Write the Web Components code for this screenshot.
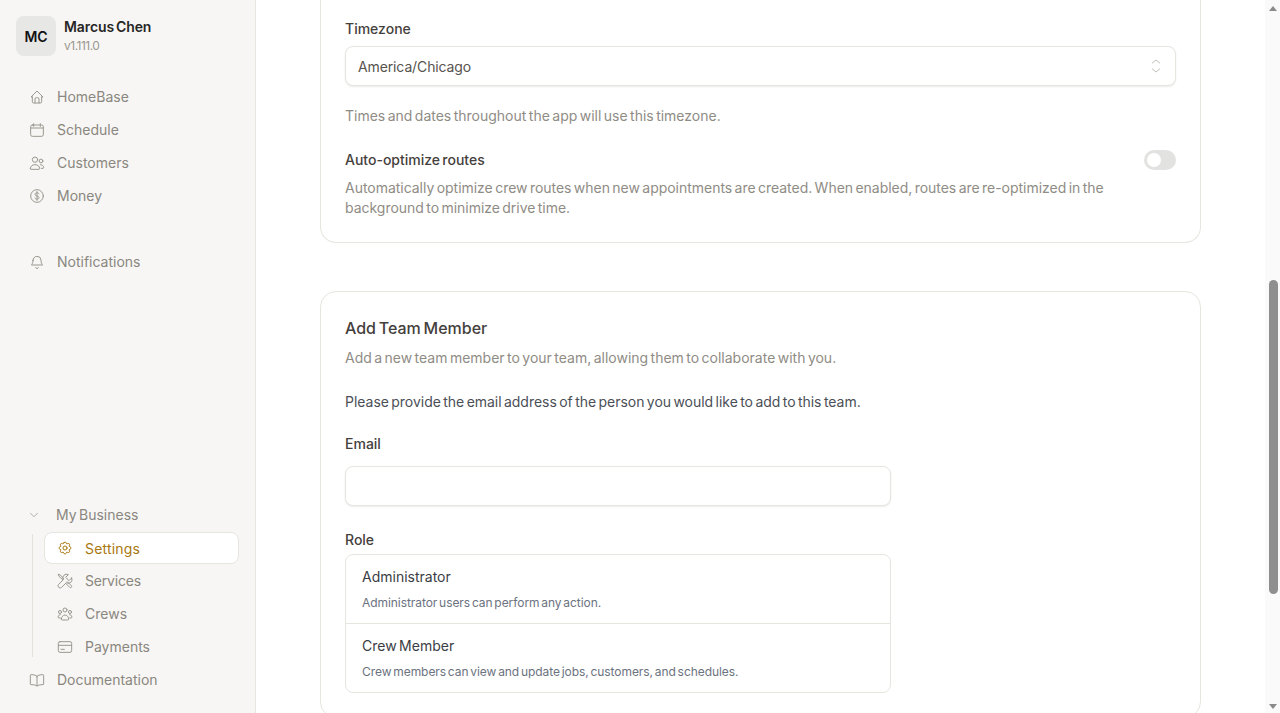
<!DOCTYPE html>
<html lang="en">
<head>
<meta charset="utf-8">
<title>Settings</title>
<style>
html, body { margin: 0; height: 100%; overflow: hidden; }
body { font-family: Inter, "Liberation Sans", sans-serif; font-size: 14px; word-spacing: -1.5px; color: #44403c; background: #fff; }
</style>
</head>
<body>
<app-shell>
  <app-sidebar slot="side"></app-sidebar>
  <settings-card class="first">
    <form-label>Timezone</form-label>
    <select-box>America/Chicago</select-box>
    <hint-text style="margin-top:20px">Times and dates throughout the app will use this timezone.</hint-text>
    <toggle-row>Auto-optimize routes</toggle-row>
    <hint-text style="margin-top:8px;letter-spacing:-.025px">Automatically optimize crew routes when new appointments are created. When enabled, routes are re-optimized in the background to minimize drive time.</hint-text>
  </settings-card>
  <settings-card class="second">
    <add-member></add-member>
  </settings-card>
  <app-scrollbar slot="bar"></app-scrollbar>
</app-shell>

<script>
const ICONS = {
  home: '<path d="M5 12H3l9-9 9 9h-2"/><path d="M5 12v7a2 2 0 0 0 2 2h10a2 2 0 0 0 2-2v-7"/><path d="M9 21v-6a2 2 0 0 1 2-2h2a2 2 0 0 1 2 2v6"/>',
  calendar: '<path d="M7 2.500v4M17 2.500v4"/><rect x="2.500" y="4.500" width="19" height="17" rx="2.500"/><path d="M2.500 9h19"/>',
  users: '<circle cx="9" cy="7" r="4"/><path d="M2 20.500c0-3.600 3-6 7-6s7 2.400 7 6c0 .6-.4 1-1 1H3c-.6 0-1-.4-1-1Z"/><circle cx="18" cy="9" r="2.800"/><path d="M17 14.600c3 0 5 1.700 5 4.400 0 .6-.4 1-1 1h-2.500"/>',
  money: '<circle cx="12" cy="12" r="9.500"/><path d="M15 8.800c-.5-1-1.600-1.600-3-1.600-1.800 0-3 .9-3 2.300 0 3.200 6 1.600 6 4.900 0 1.400-1.300 2.400-3 2.400-1.500 0-2.600-.7-3.100-1.800"/><path d="M12 5.500v13"/>',
  bell: '<path d="M6 9.500a6 6 0 0 1 12 0c0 5 2.500 7 2.500 7h-17S6 14.500 6 9.500Z"/><path d="M10 20.500a2.200 2.200 0 0 0 4 0"/>',
  chevron: '<path d="m6 9 6 6 6-6"/>',
  gear: '<path d="M10.325 4.317c.426-1.756 2.924-1.756 3.350 0a1.724 1.724 0 0 0 2.573 1.066c1.543-.94 3.310.826 2.370 2.370a1.724 1.724 0 0 0 1.065 2.572c1.756.426 1.756 2.924 0 3.350a1.724 1.724 0 0 0-1.066 2.573c.94 1.543-.826 3.310-2.370 2.370a1.724 1.724 0 0 0-2.572 1.065c-.426 1.756-2.924 1.756-3.350 0a1.724 1.724 0 0 0-2.573-1.066c-1.543.94-3.310-.826-2.370-2.370a1.724 1.724 0 0 0-1.065-2.572c-1.756-.426-1.756-2.924 0-3.350a1.724 1.724 0 0 0 1.066-2.573c-.94-1.543.826-3.310 2.370-2.370 1 .608 2.296.07 2.572-1.065z"/><circle cx="12" cy="12" r="3"/>',
  tools: '<path d="M22 7.500 18 11.500 13 6.500 17 2.500a5.500 5.500 0 0 0-7.500 7.500L2.500 17a3 3 0 0 0 4.500 4.500L14 14.500a5.500 5.500 0 0 0 8-7Z"/><path d="M8.500 10 3 5 1.800 1.800 5 3l5 5.500"/><path d="m15.500 13 6 6a2 2 0 0 1 0 2.500a2 2 0 0 1-2.500 0l-6-6"/>',
  crews: '<circle cx="12" cy="6" r="3"/><circle cx="4.500" cy="9" r="2.300"/><circle cx="19.500" cy="9" r="2.300"/><path d="M6.500 19.500c0-3 2.500-6 5.500-6s5.500 3 5.500 6c0 .8-.5 1.500-1.500 1.500H8c-1 0-1.500-.7-1.500-1.500Z"/><path d="M5 18H3c-.8 0-1.300-.6-1.300-1.300 0-2 1.300-3.700 3.300-3.700"/><path d="M19 18h2c.8 0 1.300-.6 1.300-1.300 0-2-1.300-3.700-3.300-3.700"/>',
  card: '<rect x="2" y="4" width="20" height="16" rx="2.500"/><path d="M2 9.500h20"/><path d="M6 15.500h5"/>',
  book: '<path d="M12 6.500C10.500 4.800 8 4 3 4c-.6 0-1 .4-1 1v13c0 .6.4 1 1 1 5 0 7.500.8 9 2 1.500-1.200 4-2 9-2 .6 0 1-.4 1-1V5c0-.6-.4-1-1-1-5 0-7.500.8-9 2.500Z"/><path d="M12 6.500V21"/>'
};

function define(name, css, html) {
  customElements.define(name, class extends HTMLElement {
    constructor() {
      super();
      this.attachShadow({ mode: 'open' }).innerHTML = '<style>' + css + '</style>' + (typeof html === 'function' ? html(this) : html);
    }
  });
}

define('nav-icon', `
  :host { display: inline-flex; width: 16px; height: 16px; flex: none; }
  svg { width: 100%; height: 100%; fill: none; stroke: currentColor; stroke-width: 1.500; stroke-linecap: round; stroke-linejoin: round; }
`, el => '<svg viewBox="0 0 24 24">' + ICONS[el.getAttribute('name')] + '</svg>');

define('nav-item', `
  :host { display: flex; align-items: center; gap: 12px; height: 33px; padding-left: 29px; color: #8a8780; font-size: 14px; box-sizing: border-box; }
  :host([sub]) { padding-left: 57px; }
  .ic { color: #9b9890; display: inline-flex; }
`, el => '<span class="ic"><nav-icon name="' + el.getAttribute('icon') + '"></nav-icon></span><slot></slot>');

define('sub-active', `
  :host { display: flex; align-items: center; gap: 12px; height: 32px; margin: 1px 16px 0 44px; padding-left: 12px; box-sizing: border-box;
    background: #fff; border: 1px solid #e7e5e0; border-radius: 8px; color: #a9780f; font-size: 14px; letter-spacing: .2px; }
`, el => '<nav-icon name="gear"></nav-icon><slot></slot>');

define('nav-group', `
  :host { display: block; position: relative; }
  .head { display: flex; align-items: center; gap: 15px; height: 33px; padding-left: 27px; color: #8a8780; font-size: 14px; box-sizing: border-box; }
  .head nav-icon { width: 14px; height: 14px; color: #a5a29a; }
  .rail { position: absolute; left: 32px; top: 36px; bottom: 6px; width: 1px; background: #e4e2dd; }
`, `<div class="head"><nav-icon name="chevron"></nav-icon>My Business</div><div class="rail"></div><slot></slot>`);

define('app-sidebar', `
  :host { display: flex; flex-direction: column; width: 256px; height: 713px; box-sizing: border-box; background: #f7f6f4; border-right: 1px solid #e7e5e0; flex: none; }
  .who { display: flex; gap: 8px; padding: 16px 16px 0; height: 64px; }
  .avatar { width: 40px; height: 40px; border-radius: 8px; background: #e7e7e6; color: #111; font-weight: 600; font-size: 14px; display: flex; align-items: center; justify-content: center; }
  .name { color: #262626; font-weight: 600; font-size: 14px; line-height: 20px; margin-top: 1px; letter-spacing: -.1px; }
  .ver { color: #9a978f; font-size: 12px; line-height: 16px; margin-top: 1px; letter-spacing: -.5px; }
  .gap { height: 33px; }
  .spring { flex: 1; }
  .bottom { padding-bottom: 17px; }
`, `
  <div class="who">
    <div class="avatar">MC</div>
    <div><div class="name">Marcus Chen</div><div class="ver">v1.111.0</div></div>
  </div>
  <nav-item icon="home">HomeBase</nav-item>
  <nav-item icon="calendar">Schedule</nav-item>
  <nav-item icon="users">Customers</nav-item>
  <nav-item icon="money">Money</nav-item>
  <div class="gap"></div>
  <nav-item icon="bell">Notifications</nav-item>
  <div class="spring"></div>
  <div class="bottom">
    <nav-group>
      <sub-active>Settings</sub-active>
      <nav-item sub icon="tools" style="letter-spacing:-.2px">Services</nav-item>
      <nav-item sub icon="crews">Crews</nav-item>
      <nav-item sub icon="card">Payments</nav-item>
    </nav-group>
    <nav-item icon="book">Documentation</nav-item>
  </div>
`);

define('app-shell', `
  :host { display: flex; width: 1280px; height: 713px; overflow: hidden; }
  main { flex: 1; min-width: 0; display: flex; flex-direction: column; align-items: flex-start; gap: 48px; padding-left: 64px; overflow: hidden; }
`, `<slot name="side"></slot><main><slot></slot></main><slot name="bar"></slot>`);

define('settings-card', `
  :host { display: block; width: 881px; flex: none; box-sizing: border-box; background: #fff; border: 1px solid #e7e5e0; border-radius: 16px; padding: 24px; }
  :host(.first) { border-top: 0; border-top-left-radius: 0; border-top-right-radius: 0; padding-top: 19px; padding-bottom: 24px; }
`, `<slot></slot>`);

define('form-label', `
  :host { display: block; color: #44403c; font-size: 14px; font-weight: 500; line-height: 20px; }
`, `<slot></slot>`);

define('hint-text', `
  :host { display: block; color: #8f8c85; font-size: 14px; line-height: 20px; }
`, `<slot></slot>`);

define('select-box', `
  :host { display: flex; align-items: center; justify-content: space-between; height: 40px; margin-top: 7px; padding: 0 11px 0 12px; box-sizing: border-box;
    border: 1px solid #e7e5e0; border-radius: 8px; box-shadow: 0 1px 2px rgba(0,0,0,.08); color: #57534e; font-size: 14px; letter-spacing: -.12px; background: #fff; }
  svg { width: 16px; height: 16px; fill: none; stroke: #c4c1ba; stroke-width: 1.500; stroke-linecap: round; stroke-linejoin: round; }
`, `<slot></slot><svg viewBox="0 0 24 24"><path d="m6.500 7.500 5.500-4.500 5.500 4.500M6.500 16.500l5.500 4.500 5.500-4.500"/></svg>`);

define('toggle-row', `
  :host { display: flex; align-items: center; justify-content: space-between; margin-top: 24px; color: #44403c; font-size: 14px; font-weight: 500; line-height: 20px; }
  .sw { width: 32px; height: 20px; border-radius: 10px; background: #e2e2e1; padding: 3px; box-sizing: border-box; }
  .knob { width: 14px; height: 14px; border-radius: 50%; background: #fff; }
`, `<slot></slot><div class="sw"><div class="knob"></div></div>`);

define('add-member', `
  :host { display: block; }
  h2 { margin: 0; color: #44403c; font-size: 16px; font-weight: 500; line-height: 24px; }
  .desc { color: #8f8c85; font-size: 14px; line-height: 20px; margin-top: 8px; }
  .lead { color: #4b4f57; font-size: 14px; line-height: 20px; margin-top: 24px; letter-spacing: -.025px; }
  form-label { margin-top: 22px; }
  .col { width: 546px; }
  .input { height: 40px; margin-top: 12px; border: 1px solid #e7e5e0; border-radius: 8px; box-shadow: 0 1px 2px rgba(0,0,0,.08); box-sizing: border-box; background: #fff; }
  .role-label { margin-top: 24px; }
  .roles { margin-top: 4px; border: 1px solid #e7e5e0; border-radius: 8px; }
  .role { height: 68px; padding: 12px 16px; box-sizing: border-box; }
  .role + .role { height: 69px; border-top: 1px solid #e7e5e0; }
  .t { color: #3a3d44; font-size: 14px; line-height: 20px; }
  .d { color: #6b7280; font-size: 12px; line-height: 16px; margin-top: 8px; letter-spacing: -.06px; }
`, `
  <h2>Add Team Member</h2>
  <div class="desc">Add a new team member to your team, allowing them to collaborate with you.</div>
  <div class="lead">Please provide the email address of the person you would like to add to this team.</div>
  <div class="col">
    <form-label>Email</form-label>
    <div class="input"></div>
    <form-label class="role-label">Role</form-label>
    <div class="roles">
      <div class="role"><div class="t">Administrator</div><div class="d">Administrator users can perform any action.</div></div>
      <div class="role"><div class="t">Crew Member</div><div class="d">Crew members can view and update jobs, customers, and schedules.</div></div>
    </div>
  </div>
`);

define('app-scrollbar', `
  :host { display: flex; flex-direction: column; align-items: center; width: 15px; height: 713px; flex: none; background: #fafafa; }
  .up, .down { width: 0; height: 0; border-left: 4.500px solid transparent; border-right: 4.500px solid transparent; flex: none; margin-left: 1px; }
  .up { border-bottom: 5px solid #8a8a8a; margin-top: 6px; }
  .down { border-top: 5px solid #8a8a8a; margin-bottom: 4px; }
  .t1 { height: 269px; flex: none; }
  .thumb { width: 9px; height: 314px; margin-left: 1px; border-radius: 5px; background: #8f8f8f; flex: none; }
  .t2 { flex: 1; }
`, `<div class="up"></div><div class="t1"></div><div class="thumb"></div><div class="t2"></div><div class="down"></div>`);
</script>
</body>
</html>
